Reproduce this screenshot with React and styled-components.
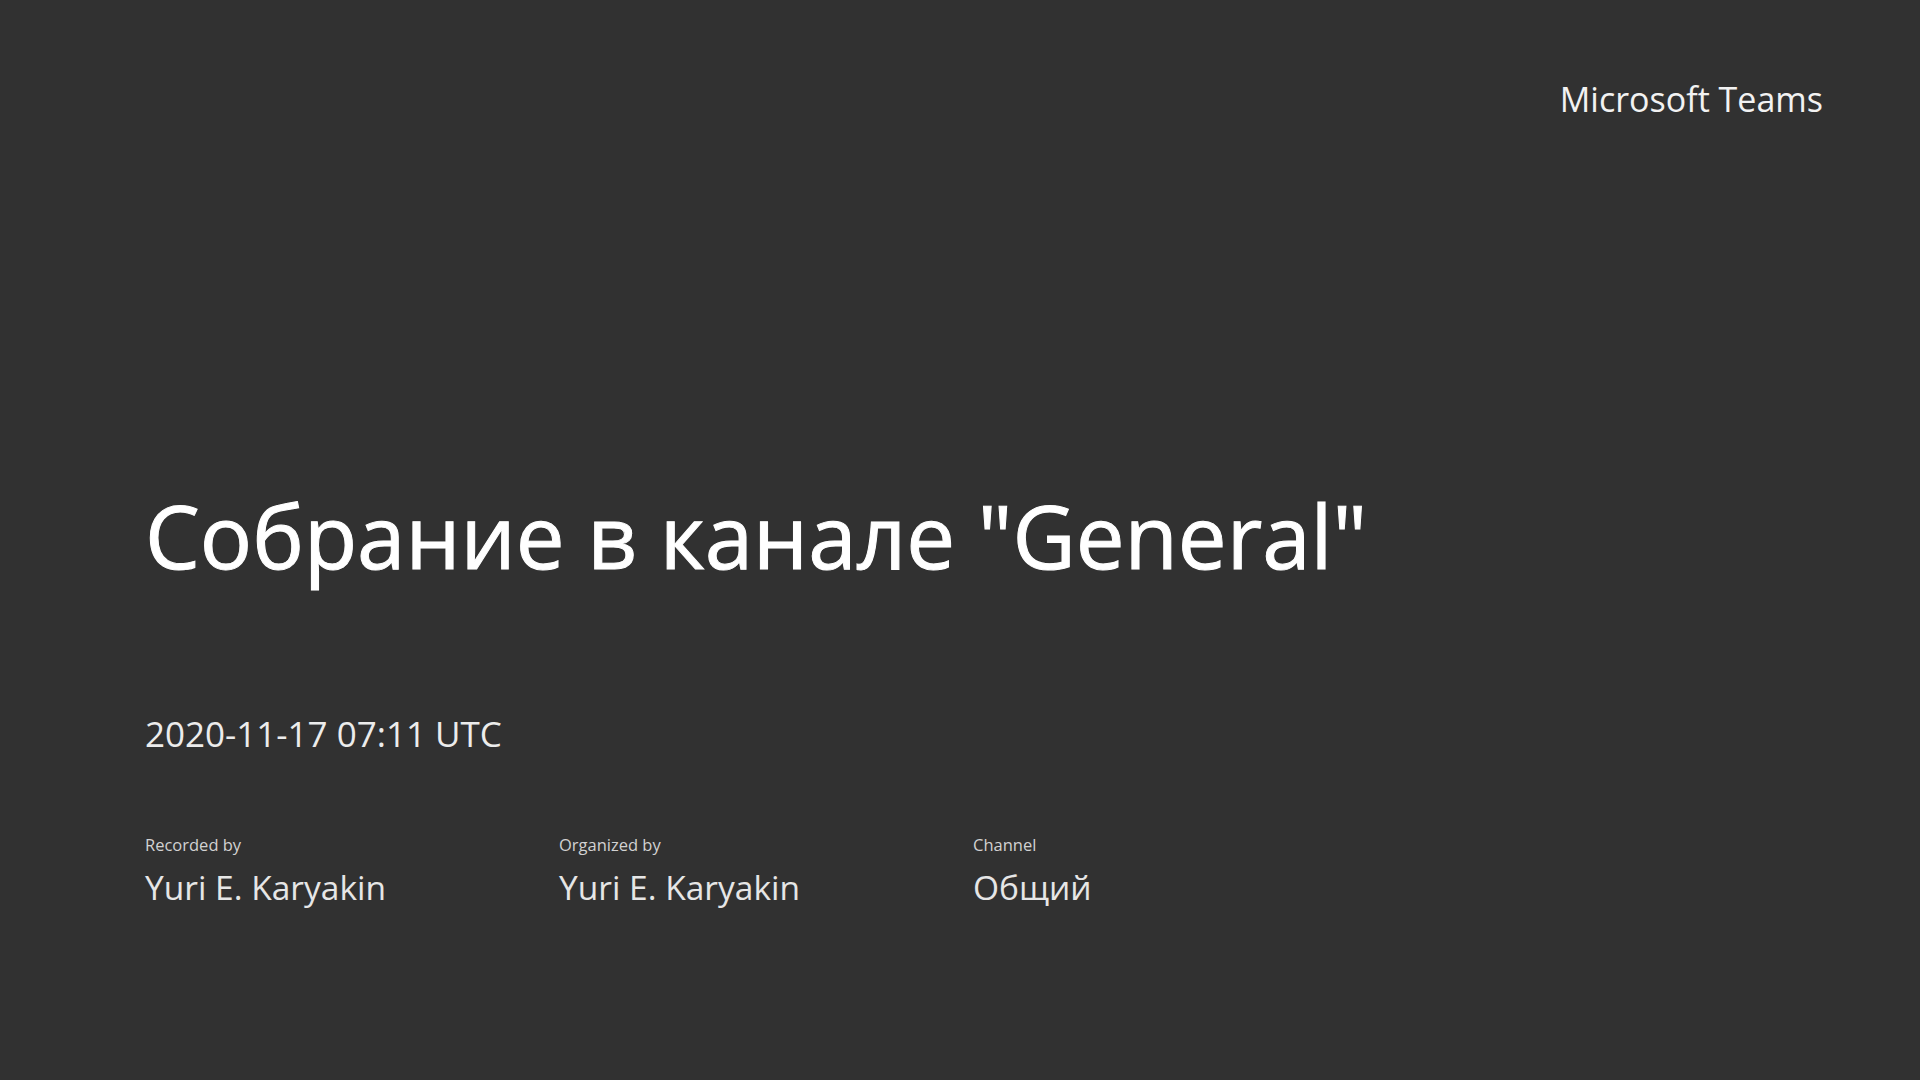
import React from 'react';
import styled, { createGlobalStyle } from 'styled-components';

const GlobalStyle = createGlobalStyle`
    html, body {
        margin: 0;
        padding: 0;
        background: #313131;
    }
`;

const Slide = styled.main`
    width: 1920px;
    height: 1080px;
    box-sizing: border-box;
    padding: 78px 97px 0 145px;
    display: flex;
    flex-direction: column;
    background: #313131;
    color: #fff;
    font-family: "Open Sans", "Noto Sans", "Liberation Sans", sans-serif;
    overflow: hidden;
`;

const Brand = styled.div`
    align-self: flex-end;
    font-size: 34px;
    line-height: 42px;
    color: #f2f2f2;
`;

const Title = styled.h1`
    margin: 359px 0 0;
    font-size: 87px;
    line-height: 112px;
    font-weight: 400;
    -webkit-text-stroke: 1px #fff;
`;

const DateLine = styled.div`
    margin-top: 121px;
    font-size: 35px;
    line-height: 44px;
    color: #ececec;
`;

const Meta = styled.div`
    margin-top: 78px;
    display: grid;
    grid-template-columns: repeat(3, 414px);
`;

const MetaItem = styled.div`
    display: flex;
    flex-direction: column;
    gap: 10px;
`;

const MetaLabel = styled.div`
    font-size: 16.5px;
    line-height: 22px;
    color: #d2d2d2;
`;

const MetaValue = styled.div`
    font-size: 33.5px;
    line-height: 42px;
    color: #e6e6e6;
`;

const details = [
    { label: 'Recorded by', value: 'Yuri E. Karyakin' },
    { label: 'Organized by', value: 'Yuri E. Karyakin' },
    { label: 'Channel', value: 'Общий' },
];

const App = () => {
    return (
        <>
            <GlobalStyle />
            <Slide>
                <Brand>Microsoft Teams</Brand>
                <Title>Собрание в канале "General"</Title>
                <DateLine>2020-11-17 07:11 UTC</DateLine>
                <Meta>
                    {details.map((item) => (
                        <MetaItem key={item.label}>
                            <MetaLabel>{item.label}</MetaLabel>
                            <MetaValue>{item.value}</MetaValue>
                        </MetaItem>
                    ))}
                </Meta>
            </Slide>
        </>
    );
};

export default App;
